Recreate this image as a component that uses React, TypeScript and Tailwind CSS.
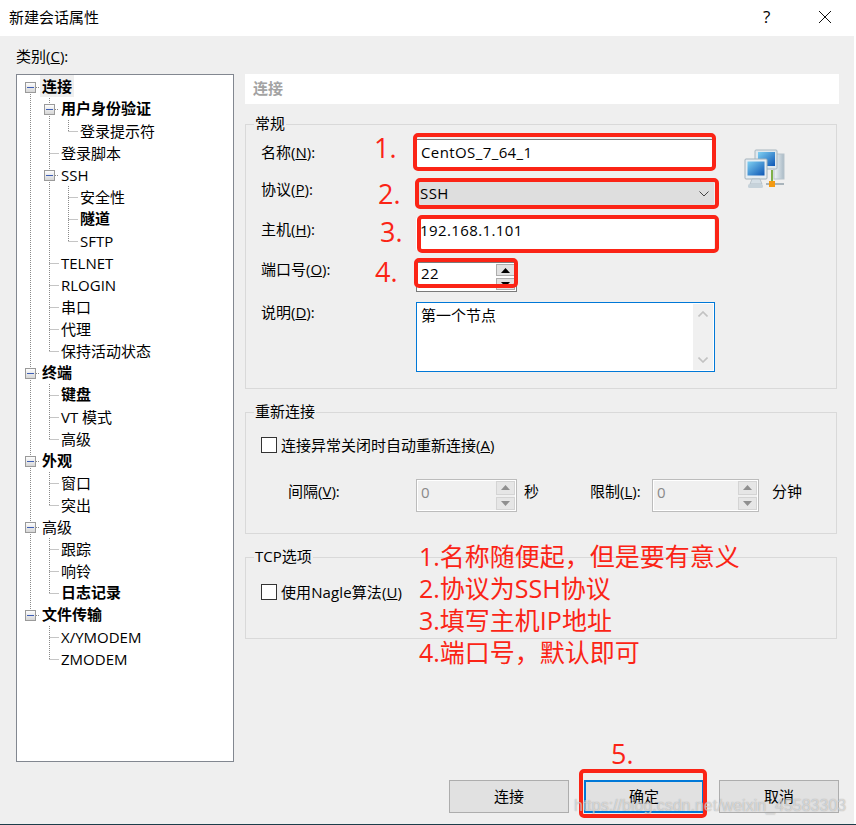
import React from "react";

type Cell = "V" | "T" | "L" | "B" | "R" | "E" | "N";

function TreeCell({ kind }: { kind: Cell }) {
  const dot = { stroke: "#8a8a8a", strokeWidth: 1, strokeDasharray: "1 1" };
  return (
    <svg width="19" height="22" viewBox="0 0 19 22" className="shrink-0 block">
      {(kind === "V" || kind === "T") && <line x1="9.5" y1="0" x2="9.5" y2="22" {...dot} />}
      {kind === "L" && <line x1="9.5" y1="0" x2="9.5" y2="11" {...dot} />}
      {(kind === "T" || kind === "L") && <line x1="9.5" y1="11.5" x2="19" y2="11.5" {...dot} />}
      {(kind === "B" || kind === "R" || kind === "E") && (
        <>
          {kind !== "R" && <line x1="9.5" y1="0" x2="9.5" y2="6" {...dot} />}
          {kind !== "E" && <line x1="9.5" y1="16" x2="9.5" y2="22" {...dot} />}
          <line x1="15" y1="11.5" x2="19" y2="11.5" {...dot} />
          <defs>
            <linearGradient id="bx" x1="0" y1="0" x2="0" y2="1">
              <stop offset="0" stopColor="#ffffff" />
              <stop offset="1" stopColor="#d4d4d4" />
            </linearGradient>
          </defs>
          <rect x="4.5" y="6.5" width="10" height="10" fill="url(#bx)" stroke="#9a9a9a" />
          <line x1="6" y1="11.5" x2="13" y2="11.5" stroke="#3f5fb5" strokeWidth="1" />
        </>
      )}
    </svg>
  );
}

const rows: { c: Cell[]; t: string; b?: boolean; sel?: boolean }[] = [
  { c: ["R"], t: "连接", b: true, sel: true },
  { c: ["V", "B"], t: "用户身份验证", b: true },
  { c: ["V", "V", "L"], t: "登录提示符" },
  { c: ["V", "T"], t: "登录脚本" },
  { c: ["V", "B"], t: "SSH" },
  { c: ["V", "V", "T"], t: "安全性" },
  { c: ["V", "V", "T"], t: "隧道", b: true },
  { c: ["V", "V", "L"], t: "SFTP" },
  { c: ["V", "T"], t: "TELNET" },
  { c: ["V", "T"], t: "RLOGIN" },
  { c: ["V", "T"], t: "串口" },
  { c: ["V", "T"], t: "代理" },
  { c: ["V", "L"], t: "保持活动状态" },
  { c: ["B"], t: "终端", b: true },
  { c: ["V", "T"], t: "键盘", b: true },
  { c: ["V", "T"], t: "VT 模式" },
  { c: ["V", "L"], t: "高级" },
  { c: ["B"], t: "外观", b: true },
  { c: ["V", "T"], t: "窗口" },
  { c: ["V", "L"], t: "突出" },
  { c: ["B"], t: "高级" },
  { c: ["V", "T"], t: "跟踪" },
  { c: ["V", "T"], t: "响铃" },
  { c: ["V", "L"], t: "日志记录", b: true },
  { c: ["E"], t: "文件传输", b: true },
  { c: ["N", "T"], t: "X/YMODEM" },
  { c: ["N", "L"], t: "ZMODEM" },
];

function Arrow({ up, color }: { up?: boolean; color: string }) {
  return (
    <svg width="9" height="5" viewBox="0 0 9 5" className="block">
      <polygon points={up ? "4.5,0 9,5 0,5" : "0,0 9,0 4.5,5"} fill={color} />
    </svg>
  );
}

function Spin({ value, disabled, className, textClass }: { value: string; disabled?: boolean; className: string; textClass?: string }) {
  return (
    <div
      className={
        "flex shrink-0 border " +
        (disabled ? "bg-[#f0f0f0] border-[#bcbcbc] text-[#8a8a8a] shadow-[inset_0_0_0_1px_#ffffff] " : "bg-white border-[#7a7a7a] text-black ") +
        className
      }
    >
      <div className={"flex-1 pl-1 leading-[22px] tracking-[0.4px] " + (textClass ?? "pt-px")}>{value}</div>
      <div className="w-[21px] flex flex-col gap-[2px] p-px">
        <div className={"flex-1 flex items-center justify-center border " + (disabled ? "bg-[#e6e6e6] border-[#d4d4d4]" : "bg-[#e1e1e1] border-[#adadad]")}>
          <Arrow up color={disabled ? "#8f8f8f" : "#000000"} />
        </div>
        <div className={"flex-1 flex items-center justify-center border " + (disabled ? "bg-[#e6e6e6] border-[#d4d4d4]" : "bg-[#e1e1e1] border-[#adadad]")}>
          <Arrow color={disabled ? "#8f8f8f" : "#000000"} />
        </div>
      </div>
    </div>
  );
}

function NetIcon() {
  return (
    <svg width="42" height="42" viewBox="0 0 42 42" className="block">
      <defs>
        <linearGradient id="scr" x1="0" y1="0" x2="1" y2="1">
          <stop offset="0" stopColor="#7fd0f2" />
          <stop offset="1" stopColor="#0d56b5" />
        </linearGradient>
        <linearGradient id="twr" x1="0" y1="0" x2="1" y2="0">
          <stop offset="0" stopColor="#f2f6f8" />
          <stop offset="1" stopColor="#a9bac6" />
        </linearGradient>
      </defs>
      <rect x="30" y="5" width="10" height="25" fill="url(#twr)" stroke="#b8c4cc" />
      <rect x="11" y="1" width="22" height="19" rx="1" fill="#dfe8ee" stroke="#a8b6bf" />
      <rect x="14" y="3" width="17" height="14" fill="url(#scr)" />
      <rect x="1" y="10" width="22" height="20" rx="1" fill="#e6edf2" stroke="#a3b2bb" />
      <rect x="3.5" y="12.5" width="17" height="14" fill="url(#scr)" />
      <path d="M8 30h8l2 5H6z" fill="#d5dfe6" stroke="#a9b6bf" strokeWidth="0.7" />
      <rect x="4" y="35" width="15" height="4" rx="1.5" fill="#c6d2da" />
      <rect x="22" y="34" width="18" height="2" fill="#a9b4bb" />
      <rect x="27" y="21" width="2" height="12" fill="#7fb04a" />
      <rect x="25" y="32" width="6" height="6" fill="#f39a12" />
    </svg>
  );
}

function CheckRow({ label, className }: { label: React.ReactNode; className: string }) {
  return (
    <div className={"flex items-center ml-[15px] " + className}>
      <div className="w-4 h-4 bg-white border border-[#333333]" />
      <div className="ml-1 whitespace-nowrap">{label}</div>
    </div>
  );
}

function Group({ title, className, children }: { title: string; className: string; children: React.ReactNode }) {
  return (
    <fieldset className={"w-[592px] border border-[#d9d9d9] " + className}>
      <legend className="ml-2 px-px leading-5 text-[15px]">
        <span className="block -translate-y-px">{title}</span>
      </legend>
      {children}
    </fieldset>
  );
}

const label = "w-[170px] shrink-0 pl-[15px] leading-[22px]";
const red = "absolute border-[4px] border-[#fb2416] rounded-[5px]";
const num = "absolute text-[#fb2416] text-[27px] leading-9";

export default function App() {
  return (
    <div className="relative w-[856px] h-[825px] overflow-hidden bg-white text-[15px] text-black font-['Open_Sans','Noto_Sans_CJK_SC',sans-serif]">
      <div className="w-[854px] h-[824px] flex flex-col">
        {/* title bar */}
        <div className="h-9 shrink-0 flex items-center bg-white pl-[9px]">
          <div className="flex-1 -mt-[1px]">新建会话属性</div>
          <div className="text-[17px] w-[56px] -mt-[3px] text-left">?</div>
          <svg width="12" height="12" viewBox="0 0 12 12" className="mr-[23px] -mt-[2px]">
            <path d="M0 0L12 12M12 0L0 12" stroke="#111" strokeWidth="1" />
          </svg>
        </div>

        <div className="flex-1 bg-[#efefef] flex flex-col pl-4">
          <div className="flex">
            {/* left */}
            <div className="w-[218px] shrink-0">
              <div className="h-[38px] pt-[9px] leading-[22px]">
                类别(<u>C</u>):
              </div>
              <div className="h-[688px] bg-white border border-[#828790] pl-1 pt-px">
                {rows.map((r, i) => (
                  <div key={i} className="flex h-[22px] items-center whitespace-nowrap leading-[22px]">
                    {r.c.map((k, j) => (
                      <TreeCell key={j} kind={k} />
                    ))}
                    <span className={(r.b ? "font-bold mb-[2px] " : "") + (r.sel ? "bg-[#efefef] " : "") + (r.c.length === 1 ? "px-[2px]" : "pl-[2px]")}>
                      {r.t}
                    </span>
                  </div>
                ))}
              </div>
            </div>

            {/* right */}
            <div className="ml-[11px] w-[594px] pt-[38px]">
              <div className="h-[30px] bg-white pl-2 leading-[29px] font-bold text-[#a3a3a3]">连接</div>

              <Group title="常规" className="mt-[10px] pb-4">
                <div className="flex">
                  <div className="w-[469px] shrink-0 flex flex-col">
                    <div className="flex mt-[5px] h-[29px]">
                      <div className={label + " pt-[2px]"}>
                        名称(<u>N</u>):
                      </div>
                      <div className="w-[298px] border border-[#7a7a7a] bg-white pl-1 leading-[25px] tracking-[0.4px]">CentOS_7_64_1</div>
                    </div>
                    <div className="flex mt-[10px] h-[28px]">
                      <div className={label}>
                        协议(<u>P</u>):
                      </div>
                      <div className="w-[298px] mt-[3px] h-[25px] bg-[#dedede] pl-1 pr-[5px] flex items-center justify-between leading-[24px] tracking-[0.4px]">
                        <span className="mb-[2px]">SSH</span>
                        <svg width="10" height="6" viewBox="0 0 10 6">
                          <path d="M0.5 0.5L5 5L9.5 0.5" fill="none" stroke="#444" />
                        </svg>
                      </div>
                    </div>
                    <div className="flex mt-[12px] h-[32px]">
                      <div className={label}>
                        主机(<u>H</u>):
                      </div>
                      <div className="w-[298px] bg-white pl-1 leading-[24px] tracking-[0.4px]">192.168.1.101</div>
                    </div>
                    <div className="flex mt-[8px] h-[34px]">
                      <div className={label}>
                        端口号(<u>O</u>):
                      </div>
                      <Spin value="22" textClass="-mt-px" className="w-[101px] mt-[4px] h-[30px]" />
                    </div>
                    <div className="flex mt-[9px] h-[71px]">
                      <div className={label}>
                        说明(<u>D</u>):
                      </div>
                      <div className="w-[299px] mt-[1px] h-[70px] border border-[#0078d7] bg-white flex">
                        <div className="flex-1 pl-1 pt-px leading-[22px]">第一个节点</div>
                        <div className="w-5 my-px mr-px bg-[#f0f0f0] flex flex-col items-center justify-between py-[7px]">
                          <svg width="10" height="6" viewBox="0 0 10 6">
                            <path d="M0.5 5.5L5 1L9.5 5.5" fill="none" stroke="#c2c2c2" strokeWidth="1.6" />
                          </svg>
                          <svg width="10" height="6" viewBox="0 0 10 6">
                            <path d="M0.5 0.5L5 5L9.5 0.5" fill="none" stroke="#c2c2c2" strokeWidth="1.6" />
                          </svg>
                        </div>
                      </div>
                    </div>
                  </div>
                  <div className="ml-[29px] mt-[15px]">
                    <NetIcon />
                  </div>
                </div>
              </Group>

              <Group title="重新连接" className="mt-[13px] pb-[21px]">
                <CheckRow
                  className="mt-[15px] h-4"
                  label={
                    <>
                      连接异常关闭时自动重新连接(<u>A</u>)
                    </>
                  }
                />
                <div className="flex mt-[26px] h-[33px]">
                  <div className="w-[170px] shrink-0 pl-[42px] leading-[25px]">
                    间隔(<u>V</u>):
                  </div>
                  <Spin value="0" disabled className="w-[101px] h-[33px]" />
                  <div className="ml-[7px] w-[66px] leading-[25px]">秒</div>
                  <div className="w-[62px] leading-[25px]">
                    限制(<u>L</u>):
                  </div>
                  <Spin value="0" disabled className="w-[107px] h-[33px]" />
                  <div className="ml-[13px] leading-[25px]">分钟</div>
                </div>
              </Group>

              <Group title="TCP选项" className="mt-[13px] pb-[38px]">
                <CheckRow
                  className="mt-[17px] h-4"
                  label={
                    <span className="tracking-[0.1px]">
                      使用Nagle算法(<u>U</u>)
                    </span>
                  }
                />
              </Group>
            </div>
          </div>

          {/* footer */}
          <div className="flex justify-end gap-[15px] mt-[18px] pr-[15px]">
            <div className="w-[120px] h-[33px] border border-[#adadad] bg-[#e1e1e1] flex items-center justify-center">连接</div>
            <div className="w-[120px] h-[33px] border-2 border-[#0078d7] bg-[#e1e1e1] flex items-center justify-center">确定</div>
            <div className="w-[120px] h-[33px] border border-[#adadad] bg-[#e1e1e1] flex items-center justify-center">取消</div>
          </div>
        </div>
      </div>
      <div className="h-px bg-[#1d3d4a]" />

      {/* annotations */}
      <div className={red + " left-[413px] top-[133px] w-[303px] h-[38px]"} />
      <div className={red + " left-[415px] top-[178px] w-[304px] h-[31px]"} />
      <div className={red + " left-[417px] top-[215px] w-[302px] h-[38px]"} />
      <div className={red + " left-[414px] top-[258px] w-[104px] h-[30px]"} />
      <div className={red + " left-[579px] top-[769px] w-[128px] h-[49px]"} />

      <div className={num + " left-[374px] top-[130px]"}>1.</div>
      <div className={num + " left-[378px] top-[176px]"}>2.</div>
      <div className={num + " left-[380px] top-[214px]"}>3.</div>
      <div className={num + " left-[375px] top-[254px]"}>4.</div>
      <div className={num + " left-[611px] top-[736px]"}>5.</div>

      <div className="absolute left-[419px] top-[540px] text-[#fb2416] text-[25px] leading-8 whitespace-nowrap">
        <div>1.名称随便起，但是要有意义</div>
        <div>2.协议为SSH协议</div>
        <div>3.填写主机IP地址</div>
        <div>4.端口号，默认即可</div>
      </div>

      <div className="absolute left-[574px] top-[795px] text-[16px] leading-[22px] whitespace-nowrap font-['Liberation_Sans',sans-serif] text-white/55 [text-shadow:0_0_1px_rgba(90,90,90,0.6)]">
        https://blog.csdn.net/weixin_45583303
      </div>
    </div>
  );
}
